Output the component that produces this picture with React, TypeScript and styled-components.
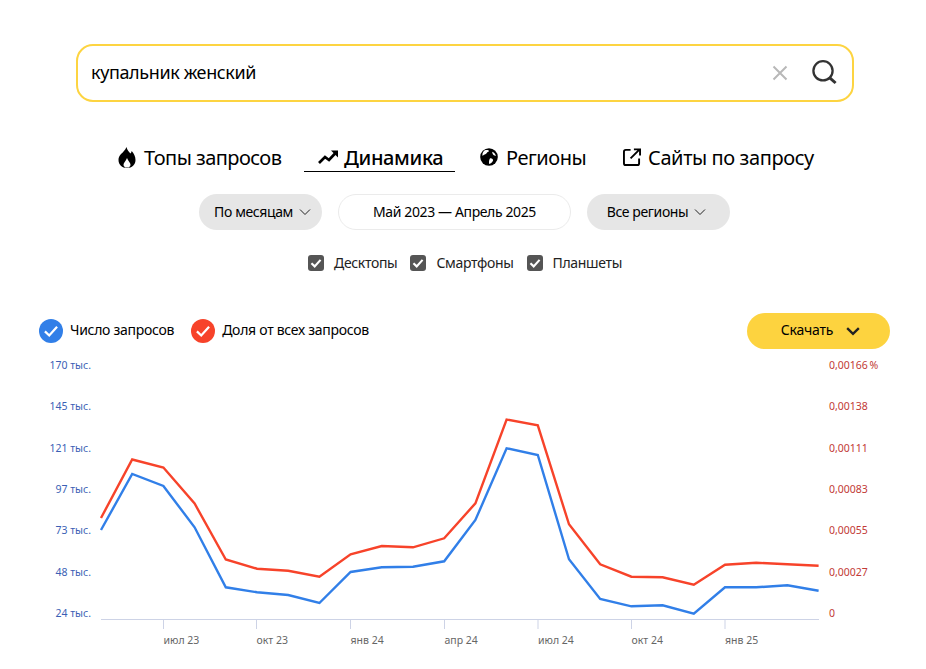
import React from 'react';
import styled, { createGlobalStyle } from 'styled-components';

const GlobalStyle = createGlobalStyle`
    html, body {
        margin: 0;
        padding: 0;
        background: #fff;
        color: #000;
        font-family: "Noto Sans", "Liberation Sans", sans-serif;
    }
`;

const Page = styled.div`
    width: 926px;
    height: 669px;
    padding-top: 44px;
    box-sizing: border-box;
    overflow: hidden;
`;

const SearchBox = styled.div`
    box-sizing: border-box;
    width: 778px;
    height: 58px;
    margin-left: 76px;
    padding: 0 14px 0 13px;
    display: flex;
    align-items: center;
    border: 2px solid #fdd441;
    border-radius: 17px;
`;

const SearchText = styled.div`
    flex: 1;
    font-size: 18px;
    letter-spacing: -0.38px;
    padding-bottom: 2px;
`;

const IconButton = styled.span<{ $gap?: number }>`
    display: flex;
    margin-left: ${(p) => p.$gap || 0}px;
`;

const Tabs = styled.nav`
    margin-top: 41px;
    height: 28px;
    display: flex;
    align-items: flex-start;
    padding-left: 118px;
`;

const Tab = styled.div<{ $active?: boolean; $width?: number; $left?: number; $iconGap: number; $spacing: number }>`
    display: flex;
    align-items: center;
    flex: none;
    gap: ${(p) => p.$iconGap}px;
    height: 28px;
    width: ${(p) => (p.$width ? `${p.$width}px` : 'auto')};
    margin-left: ${(p) => p.$left || 0}px;
    padding-left: ${(p) => (p.$active ? 14 : 0)}px;
    box-sizing: content-box;
    font-size: 20px;
    letter-spacing: ${(p) => p.$spacing}px;
    font-weight: ${(p) => (p.$active ? 500 : 400)};
    border-bottom: ${(p) => (p.$active ? '1px solid #000' : 'none')};
`;

const Filters = styled.div`
    margin-top: 23px;
    padding-left: 3px;
    display: flex;
    justify-content: center;
    gap: 16px;
`;

const Pill = styled.div<{ $outlined?: boolean; $width: number; $shift?: number }>`
    box-sizing: border-box;
    width: ${(p) => p.$width}px;
    height: 36px;
    display: flex;
    align-items: center;
    justify-content: center;
    gap: 6px;
    font-size: 14px;
    letter-spacing: -0.38px;
    border-radius: 18px;
    background: ${(p) => (p.$outlined ? '#fff' : '#e6e6e6')};
    border: ${(p) => (p.$outlined ? '1px solid #ebebeb' : 'none')};
    padding-left: ${(p) => Math.max(p.$shift || 0, 0)}px;
    padding-right: ${(p) => Math.max(-(p.$shift || 0), 0)}px;
`;

const PillLabel = styled.span`
    padding-bottom: 2px;
`;

const Devices = styled.div`
    margin-top: 24px;
    height: 18px;
    padding-left: 4px;
    display: flex;
    justify-content: center;
    gap: 13px;
`;

const Device = styled.div`
    display: flex;
    align-items: center;
    gap: 10px;
    font-size: 14px;
    letter-spacing: -0.33px;
    color: #222;
`;

const DeviceName = styled.span`
    padding-bottom: 2px;
`;

const CheckBox = styled.span`
    width: 16px;
    height: 16px;
    border-radius: 3px;
    background: #555;
    display: flex;
    align-items: center;
    justify-content: center;
`;

const LegendRow = styled.div`
    margin-top: 41px;
    padding: 0 36px 0 39px;
    display: flex;
    align-items: center;
    justify-content: space-between;
`;

const Legend = styled.div`
    display: flex;
    gap: 17px;
`;

const LegendItem = styled.div`
    display: flex;
    align-items: center;
    gap: 7px;
    font-size: 14px;
    letter-spacing: -0.28px;
`;

const LegendLabel = styled.span`
    padding-bottom: 4px;
`;

const LegendDot = styled.span<{ $color: string }>`
    width: 24px;
    height: 24px;
    border-radius: 50%;
    background: ${(p) => p.$color};
    display: flex;
    align-items: center;
    justify-content: center;
`;

const DownloadButton = styled.div`
    width: 143px;
    height: 36px;
    padding-left: 4px;
    box-sizing: border-box;
    border-radius: 18px;
    background: #fdd33f;
    display: flex;
    align-items: center;
    justify-content: center;
    gap: 13px;
    font-size: 14px;
    letter-spacing: -0.2px;
`;

const DownloadLabel = styled.span`
    padding-bottom: 3px;
`;

const Chart = styled.svg`
    display: block;
    margin-top: 5px;
    font-family: "Noto Sans", "Liberation Sans", sans-serif;
`;

const Check = ({ size = 12, width = 1.8 }: { size?: number; width?: number }) => (
    <svg width={size} height={size} viewBox="0 0 10 10" fill="none">
        <path d="M1.2 5.2 L3.9 7.8 L8.8 2.4" stroke="#fff" strokeWidth={width} />
    </svg>
);

const Chevron = ({ size = 12, width = 1 }: { size?: number; width?: number }) => (
    <svg width={size} height={size} viewBox="0 0 12 12" fill="none">
        <path d="M1 3.5 L6 8.5 L11 3.5" stroke="#222" strokeWidth={width} />
    </svg>
);

// y coordinates are page pixels, the svg starts at 354
const CHART_TOP = 354;
const redLine = [518, 459.5, 467.5, 503.5, 559.5, 568.7, 570.7, 576.7, 554.3, 546, 547.3, 538.3, 503.3, 419.5, 425.3, 524.3, 564.3, 576.7, 577.3, 584.7, 564.7, 562.7, 564.3, 565.7];
const blueLine = [530, 474, 486, 527.3, 587.3, 592.3, 595, 603, 572, 567.3, 566.7, 561.3, 520, 448.3, 455, 559.3, 599, 606.3, 605.3, 613.7, 587.3, 587.3, 585.3, 590.7];
const leftLabels = ['170 тыс.', '145 тыс.', '121 тыс.', '97 тыс.', '73 тыс.', '48 тыс.', '24 тыс.'];
const rightLabels = ['0,00166\u202f%', '0,00138', '0,00111', '0,00083', '0,00055', '0,00027', '0'];
const ticks = [
    { x: 163.5, label: 'июл 23' },
    { x: 256.5, label: 'окт 23' },
    { x: 350.5, label: 'янв 24' },
    { x: 444.5, label: 'апр 24' },
    { x: 538, label: 'июл 24' },
    { x: 631.5, label: 'окт 24' },
    { x: 725, label: 'янв 25' },
];

const toPoints = (ys: number[]) =>
    ys.map((y, i) => `${101 + i * 31.2},${y - CHART_TOP}`).join(' ');

function App() {
    return (
        <Page>
            <GlobalStyle />
            <SearchBox>
                <SearchText>купальник женский</SearchText>
                <IconButton>
                    <svg width="16" height="16" viewBox="0 0 16 16" fill="none">
                        <path d="M1.5 1.5 L14.5 14.5 M14.5 1.5 L1.5 14.5" stroke="#b8b8b8" strokeWidth="2" />
                    </svg>
                </IconButton>
                <IconButton $gap={24}>
                    <svg width="26" height="26" viewBox="0 0 26 26" fill="none">
                        <circle cx="11" cy="10.8" r="9.6" stroke="#333" strokeWidth="2.3" />
                        <path d="M17.5 17.6 L23.6 23" stroke="#333" strokeWidth="3" />
                    </svg>
                </IconButton>
            </SearchBox>

            <Tabs>
                <Tab $width={186} $iconGap={8} $spacing={-0.55}>
                    <svg width="18" height="21" viewBox="0 0 18 21">
                        <path fillRule="evenodd" d="M8.5 0 C9 3 11 5 12.5 6.5 C13.2 5.8 13.6 5 13.7 4 C16 6.5 17.5 9.5 17.5 13 C17.5 17.5 14 21 9 21 C4 21 0.5 17.5 0.5 13 C0.5 8.5 3.5 7 5.5 4.5 C7 3 8 1.5 8.5 0 Z M9 11 C8 14 5.5 15.5 5.5 17.7 C5.5 19.6 7 20.5 9 20.5 C11 20.5 12.5 19.6 12.5 17.7 C12.5 15.5 10 14 9 11 Z" fill="#000" />
                    </svg>
                    Топы запросов
                </Tab>
                <Tab $active $width={137} $iconGap={6} $spacing={-0.35}>
                    <svg width="20" height="14" viewBox="0 0 20 14" fill="none">
                        <path d="M1 13 L7 7 L11 10 L18 2.5" stroke="#000" strokeWidth="2.7" />
                        <path d="M13 0.5 H20 V7.5 Z" fill="#000" />
                    </svg>
                    Динамика
                </Tab>
                <Tab $left={25} $width={143} $iconGap={8} $spacing={-0.45}>
                    <svg width="18" height="18" viewBox="0 0 19 19">
                        <circle cx="9.5" cy="9.5" r="9.3" fill="#000" />
                        <path d="M5 2.5 C7 2 9 1.8 9.5 3.2 C8.8 4.4 7.5 4.2 7 5.5 C6 7 4 6.5 2.8 8.5 C2 6.5 3 4 5 2.5 Z M10.5 11 C12.5 10.5 14 12 13.8 13.2 C13 15 11.5 16.5 9.8 17 C9.2 15.5 9.5 12.5 10.5 11 Z M13 4 C15 4.6 16.5 6.5 16.8 8.5 C15 8.2 12.5 6.5 13 4 Z" fill="#fff" />
                    </svg>
                    Регионы
                </Tab>
                <Tab $iconGap={7} $spacing={-0.4}>
                    <svg width="18" height="18" viewBox="0 0 19 19" fill="none">
                        <path d="M8 2 H3 Q1 2 1 4 V16 Q1 18 3 18 H15 Q17 18 17 16 V11" stroke="#000" strokeWidth="2" />
                        <path d="M8 11 L17 2 M11.5 1.5 H18 V8" stroke="#000" strokeWidth="2" />
                    </svg>
                    Сайты по запросу
                </Tab>
            </Tabs>

            <Filters>
                <Pill $width={123} $shift={4}>
                    <PillLabel>По месяцам</PillLabel> <Chevron />
                </Pill>
                <Pill $outlined $width={233}>
                    <PillLabel>Май 2023 — Апрель 2025</PillLabel>
                </Pill>
                <Pill $width={143} $shift={-4}>
                    <PillLabel>Все регионы</PillLabel> <Chevron />
                </Pill>
            </Filters>

            <Devices>
                {['Десктопы', 'Смартфоны', 'Планшеты'].map((name) => (
                    <Device key={name}>
                        <CheckBox>
                            <Check />
                        </CheckBox>
                        <DeviceName>{name}</DeviceName>
                    </Device>
                ))}
            </Devices>

            <LegendRow>
                <Legend>
                    <LegendItem>
                        <LegendDot $color="#317fe8">
                            <Check size={16} width={1.4} />
                        </LegendDot>
                        <LegendLabel>Число запросов</LegendLabel>
                    </LegendItem>
                    <LegendItem>
                        <LegendDot $color="#f7432a">
                            <Check size={16} width={1.4} />
                        </LegendDot>
                        <LegendLabel>Доля от всех запросов</LegendLabel>
                    </LegendItem>
                </Legend>
                <DownloadButton>
                    <DownloadLabel>Скачать</DownloadLabel>
                    <Chevron size={14} width={2} />
                </DownloadButton>
            </LegendRow>

            <Chart width="926" height="315" viewBox="0 0 926 315">
                {leftLabels.map((label, i) => (
                    <text key={label} x="91" y={15 + i * 41.3} textAnchor="end" fontSize="10.5" fill="#3b5fb5">
                        {label}
                    </text>
                ))}
                {rightLabels.map((label, i) => (
                    <text key={label} x="829" y={15 + i * 41.3} fontSize="10.5" fill="#c23a36">
                        {label}
                    </text>
                ))}
                <line x1="101" x2="819" y1="265.5" y2="265.5" stroke="#cdd3e6" />
                {ticks.map((tick) => (
                    <g key={tick.label}>
                        <line x1={tick.x} x2={tick.x} y1="265.5" y2="275" stroke="#cdd3e6" />
                        <text x={tick.x} y="290" fontSize="10.5" fill="#666">
                            {tick.label}
                        </text>
                    </g>
                ))}
                <polyline points={toPoints(redLine)} fill="none" stroke="#f7432a" strokeWidth="2.4" />
                <polyline points={toPoints(blueLine)} fill="none" stroke="#317fe8" strokeWidth="2.4" />
            </Chart>
        </Page>
    );
}

export default App;
